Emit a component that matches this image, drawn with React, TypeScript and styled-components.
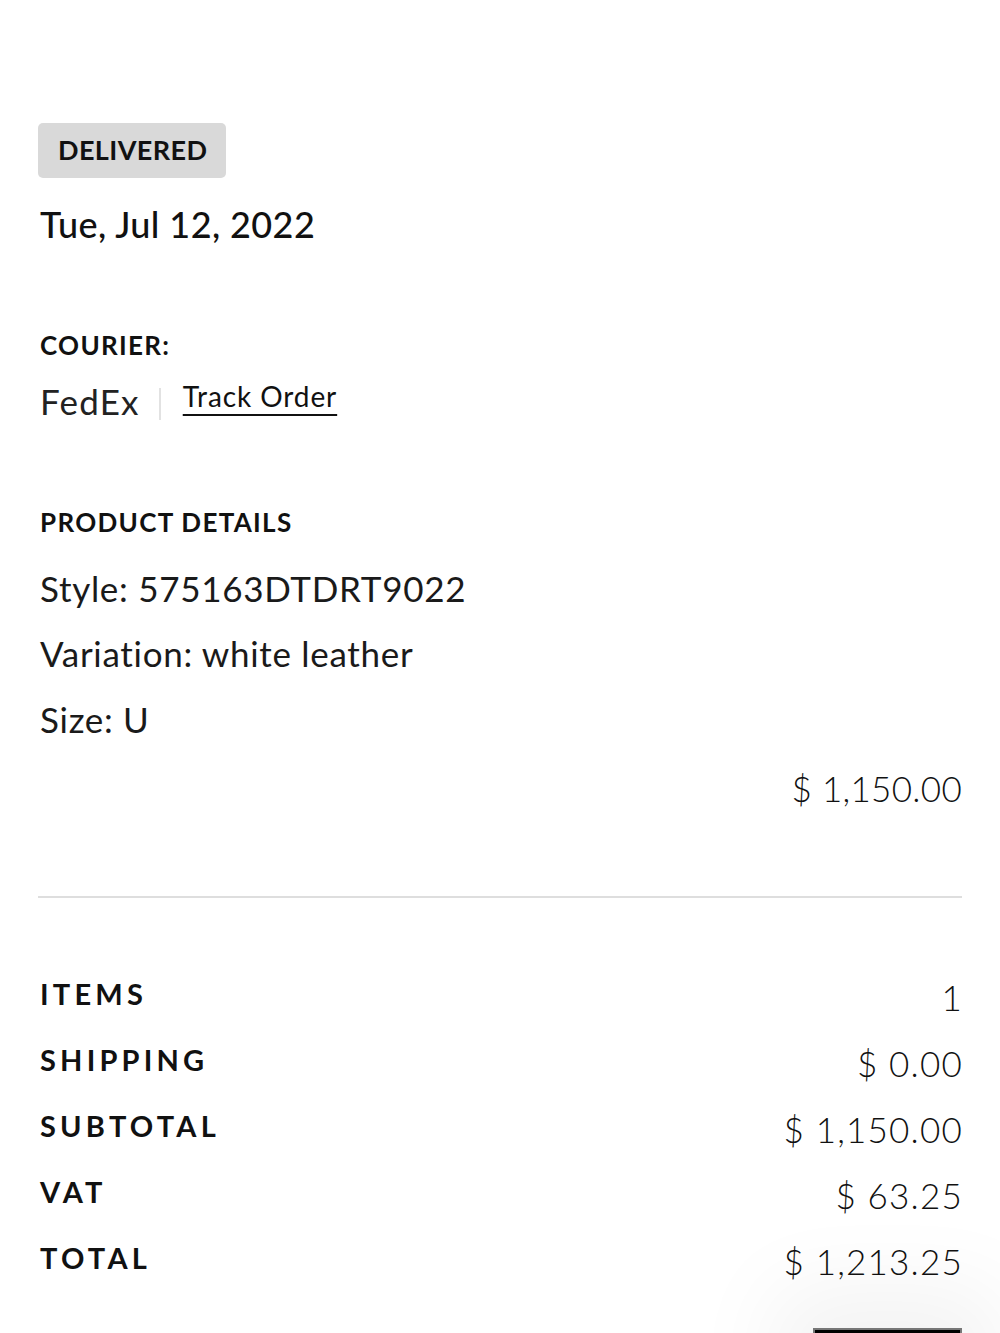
import React from 'react';
import styled, { createGlobalStyle } from 'styled-components';

const Global = createGlobalStyle`
  html, body { margin: 0; padding: 0; background: #fff; }
  body {
    font-family: Lato, "Noto Sans", sans-serif;
    color: #111;
    -webkit-font-smoothing: antialiased;
  }
`;

const Page = styled.main`
  display: flex;
  flex-direction: column;
  padding: 123px 38px 0 40px;
  line-height: 1.2;
`;

const Badge = styled.div`
  align-self: flex-start;
  display: inline-flex;
  align-items: center;
  height: 55px;
  margin-left: -2px;
  padding: 0 19px 0 20px;
  background: #d9d9d9;
  border-radius: 5px;
  font-size: 27px;
  font-weight: 700;
  letter-spacing: 0.4px;
`;

const DateText = styled.div`
  margin-top: 25px;
  font-size: 36px;
  font-weight: 500;
  letter-spacing: 0.4px;
`;

const SectionTitle = styled.div<{ $gap: number }>`
  margin-top: ${(p) => p.$gap}px;
  font-size: 26px;
  font-weight: 700;
  letter-spacing: 1.3px;
`;

const CourierRow = styled.div`
  display: flex;
  align-items: flex-start;
  margin-top: 19px;
`;

const Courier = styled.span`
  font-size: 35px;
  font-weight: 400;
  color: #222;
  letter-spacing: 1.2px;
`;

const Separator = styled.span`
  width: 2px;
  height: 32px;
  margin: 8px 22px 0 19px;
  background: #e2e2e2;
`;

const TrackLink = styled.a`
  font-size: 28px;
  font-weight: 400;
  color: #111;
  letter-spacing: 0.9px;
  text-decoration: underline;
  text-decoration-thickness: 2px;
  text-underline-offset: 7px;
  cursor: pointer;
`;

const DetailList = styled.div`
  display: flex;
  flex-direction: column;
  margin-top: 17px;
`;

const DetailLine = styled.div`
  font-size: 35px;
  line-height: 65.5px;
  font-weight: 400;
  color: #1a1a1a;
  letter-spacing: 0.7px;
`;

const Price = styled.div`
  align-self: flex-end;
  margin-top: 15px;
  font-size: 35px;
  font-weight: 300;
  letter-spacing: 0.3px;
`;

const Divider = styled.hr`
  width: calc(100% + 2px);
  margin: 87px 0 0 -2px;
  border: none;
  height: 2px;
  background: #dedede;
`;

const Summary = styled.div`
  display: flex;
  flex-direction: column;
  margin-top: 63px;
`;

const SummaryRow = styled.div`
  display: flex;
  justify-content: space-between;
  align-items: center;
  height: 66px;
`;

const Label = styled.span`
  font-size: 29px;
  font-weight: 700;
  letter-spacing: 4.2px;
`;

const Value = styled.span`
  margin-top: 5px;
  font-size: 35px;
  font-weight: 300;
  letter-spacing: 1.2px;
  margin-right: -1px;
`;

const FloatingButton = styled.button`
  position: fixed;
  right: 38px;
  top: 1328px;
  width: 149px;
  height: 60px;
  background: #000;
  border: 2px solid #777;
  box-shadow: 0 0 90px 40px rgba(0, 0, 0, 0.05);
`;

const rows: [string, string][] = [
  ['ITEMS', '1'],
  ['SHIPPING', '$ 0.00'],
  ['SUBTOTAL', '$ 1,150.00'],
  ['VAT', '$ 63.25'],
  ['TOTAL', '$ 1,213.25'],
];

export default function App() {
  return (
    <>
      <Global />
      <Page>
        <Badge>DELIVERED</Badge>
        <DateText>Tue, Jul 12, 2022</DateText>

        <SectionTitle $gap={84}>COURIER:</SectionTitle>
        <CourierRow>
          <Courier>FedEx</Courier>
          <Separator />
          <TrackLink>Track Order</TrackLink>
        </CourierRow>

        <SectionTitle $gap={85}>PRODUCT DETAILS</SectionTitle>
        <DetailList>
          <DetailLine>Style: 575163DTDRT9022</DetailLine>
          <DetailLine>Variation: white leather</DetailLine>
          <DetailLine>Size: U</DetailLine>
        </DetailList>
        <Price>$ 1,150.00</Price>

        <Divider />

        <Summary>
          {rows.map(([label, value]) => (
            <SummaryRow key={label}>
              <Label>{label}</Label>
              <Value>{value}</Value>
            </SummaryRow>
          ))}
        </Summary>
      </Page>
      <FloatingButton aria-label="action" />
    </>
  );
}
